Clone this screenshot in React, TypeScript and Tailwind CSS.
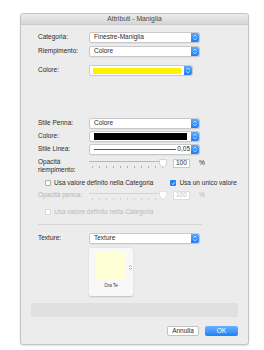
import React from "react";

function Stepper() {
  return (
    <div className="flex h-full w-[8px] shrink-0 items-center justify-center rounded-r-[2px] bg-gradient-to-b from-[#5fa9fb] to-[#1b7cf4]">
      <svg width="4" height="7" viewBox="0 0 4 7" fill="none" stroke="white" strokeWidth="0.8">
        <path d="M0.6 2.6 L2 1.2 L3.4 2.6" />
        <path d="M0.6 4.4 L2 5.8 L3.4 4.4" />
      </svg>
    </div>
  );
}

function Select({ children, w = "w-[111px]" }: { children?: React.ReactNode; w?: string }) {
  return (
    <div className={`flex h-full ${w} items-stretch rounded-[2px] border border-[#c9c9c9] bg-white shadow-[0_0.5px_0.5px_rgba(0,0,0,0.08)]`}>
      <div className="flex min-w-0 flex-1 items-center pl-[4px] text-[#2b2b2b]">{children}</div>
      <Stepper />
    </div>
  );
}

function Row({ label, children, className = "" }: { label: string; children: React.ReactNode; className?: string }) {
  return (
    <div className={`flex h-[11px] items-center ${className}`}>
      <div className="w-[51px] shrink-0 text-[#2b2b2b]">{label}</div>
      {children}
    </div>
  );
}

function Slider({ disabled = false }: { disabled?: boolean }) {
  const ticks = Array.from({ length: 11 }, (_, i) => i);
  return (
    <div className="relative h-[9px] w-[78px]">
      <div className={`absolute left-0 right-[2px] top-[2px] h-px ${disabled ? "bg-[#d5d5d5]" : "bg-[#b9b9b9]"}`} />
      <div className="absolute left-[3px] right-[4px] top-[7px] flex justify-between">
        {ticks.map((i) => (
          <div key={i} className={`h-[2px] w-px ${disabled ? "bg-[#d0d0d0]" : "bg-[#b0b0b0]"}`} />
        ))}
      </div>
      <svg className="absolute left-[70px] top-0" width="8" height="9" viewBox="0 0 8 9">
        <path
          d="M0.5 0.5 H7.5 V5 L4 8.5 L0.5 5 Z"
          fill="white"
          stroke={disabled ? "#d8d8d8" : "#bdbdbd"}
          strokeWidth="0.6"
        />
      </svg>
    </div>
  );
}

function Check({ checked = false, disabled = false }: { checked?: boolean; disabled?: boolean }) {
  if (checked) {
    return (
      <div className="flex h-[6px] w-[6px] items-center justify-center rounded-[1px] bg-[#1f83f7]">
        <svg width="5" height="5" viewBox="0 0 5 5" fill="none" stroke="white" strokeWidth="0.8">
          <path d="M1 2.6 L2 3.6 L4 1.2" />
        </svg>
      </div>
    );
  }
  return (
    <div
      className={`h-[6px] w-[6px] rounded-[1px] border bg-white ${disabled ? "border-[#d7d7d7]" : "border-[#a9a9a9]"}`}
    />
  );
}

export default function App() {
  return (
    <div className="min-h-[350px] w-[264px] bg-white pl-[20px] pt-[13px] font-['Liberation_Sans',Arial,sans-serif] text-[6.5px] leading-none">
      <div className="w-[229px] overflow-hidden rounded-[3px] border border-[#c4c4c4] bg-[#ececec] shadow-[0_1px_2px_rgba(0,0,0,0.12)]">
        <div className="flex h-[11px] items-center justify-center border-b border-[#cacaca] bg-gradient-to-b from-[#ebebeb] to-[#d6d6d6] text-[6.8px] text-[#4a4a4a]">
          Attributi - Maniglia
        </div>

        <div className="pl-[17px]">
          <Row label="Categoria:" className="mt-[7px]">
            <Select>Finestre-Maniglia</Select>
          </Row>
          <Row label="Riempimento:" className="mt-[3px]">
            <Select>Colore</Select>
          </Row>
          <Row label="Colore:" className="mt-[8px]">
            <div className="flex h-full w-[104px] items-stretch rounded-[2px] border border-[#c9c9c9] bg-white">
              <div className="flex flex-1 items-center px-[3px]">
                <div className="h-[6px] w-full bg-[#fff200]" />
              </div>
              <Stepper />
            </div>
          </Row>

          <Row label="Stile Penna:" className="mt-[42px]">
            <Select>Colore</Select>
          </Row>
          <Row label="Colore:" className="mt-[2px]">
            <Select>
              <div className="mr-[4px] h-[7px] w-full bg-black" />
            </Select>
          </Row>
          <Row label="Stile Linea:" className="mt-[2px]">
            <Select>
              <div className="flex w-full items-center gap-[1px] pr-[1px]">
                <div className="h-px flex-1 bg-[#555]" />
                <span className="text-[#2b2b2b]">0,05</span>
              </div>
            </Select>
          </Row>

          <div className="mt-[3px] flex">
            <div className="w-[51px] shrink-0 leading-[8px] text-[#2b2b2b]">
              Opacità
              <br />
              riempimento:
            </div>
            <div className="mt-[1px] flex h-[9px] items-center">
              <Slider />
              <div className="ml-[6px] flex h-[9px] w-[17px] items-center border border-[#c9c9c9] bg-white pl-[2px] text-[#2b2b2b]">
                100
              </div>
              <span className="ml-[9px] text-[#2b2b2b]">%</span>
            </div>
          </div>

          <div className="mt-[5px] flex h-[8px] items-center pl-[7px] text-[#2b2b2b]">
            <Check />
            <span className="ml-[3px]">Usa valore definito nella Categoria</span>
            <div className="ml-[17px]">
              <Check checked />
            </div>
            <span className="ml-[3px]">Usa un unico valore</span>
          </div>

          <div className="mt-[4px] flex h-[9px] items-center">
            <div className="w-[51px] shrink-0 text-[#b4b4b4]">Opacità penna:</div>
            <Slider disabled />
            <div className="ml-[6px] flex h-[9px] w-[17px] items-center border border-[#dedede] bg-white pl-[2px] text-[#c2c2c2]">
              100
            </div>
            <span className="ml-[9px] text-[#b4b4b4]">%</span>
          </div>

          <div className="mt-[8px] flex h-[8px] items-center pl-[7px] text-[#b9b9b9]">
            <Check disabled />
            <span className="ml-[3px]">Usa valore definito nella Categoria</span>
          </div>

          <div className="mt-[8px] h-px w-[164px] bg-[#d6d6d6]" />

          <Row label="Texture:" className="mt-[8px]">
            <Select>Texture</Select>
          </Row>

          <div className="ml-[51px] mt-[4px] flex h-[48px] w-[44px] flex-col items-center rounded-[2px] bg-[#f8f8f8] shadow-[0_0.5px_1.5px_rgba(0,0,0,0.18)]">
            <div className="relative mt-[3px] w-full">
              <div className="mx-auto h-[29px] w-[30px] bg-[#ffffd6]" />
              <svg className="absolute right-[1px] top-[14px]" width="3" height="5" viewBox="0 0 3 5" fill="none" stroke="#666" strokeWidth="0.6">
                <path d="M0.3 1.8 L1.5 0.6 L2.7 1.8" />
                <path d="M0.3 3.2 L1.5 4.4 L2.7 3.2" />
              </svg>
            </div>
            <div className="mt-[4px] text-[4.5px] text-[#333]">Ora Te</div>
          </div>
        </div>

        <div className="mx-[10px] mt-[7px] h-[14px] rounded-[2px] bg-[#e0e0e0]" />

        <div className="mr-[10px] mt-[9px] flex justify-end gap-[6px] pb-[8px]">
          <div className="flex h-[10px] w-[32px] items-center justify-center rounded-[2px] border border-[#c3c3c3] bg-white text-[#2b2b2b]">
            Annulla
          </div>
          <div className="flex h-[10px] w-[33px] items-center justify-center rounded-[2px] bg-gradient-to-b from-[#69b1fb] to-[#1a80f7] text-white">
            OK
          </div>
        </div>
      </div>
    </div>
  );
}
